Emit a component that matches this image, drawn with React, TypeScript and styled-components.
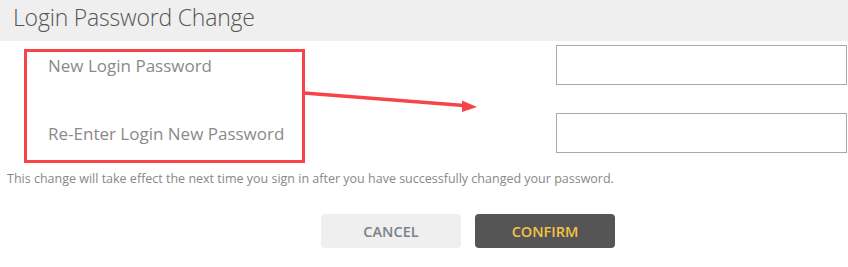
import styled, { createGlobalStyle } from 'styled-components';

const GlobalStyle = createGlobalStyle`
  html, body {
    margin: 0;
    padding: 0;
    background: #ffffff;
  }
  body {
    font-family: 'Open Sans', 'Liberation Sans', sans-serif;
  }
`;

const fields = ['New Login Password', 'Re-Enter Login New Password'];

export default function App() {
  return (
    <>
      <GlobalStyle />
      <Page>
        <Header>
          <Title>Login Password Change</Title>
        </Header>
        <Form>
          {fields.map((label) => (
            <FieldRow key={label}>
              <FieldLabel>{label}</FieldLabel>
              <FieldInput type="password" />
            </FieldRow>
          ))}
        </Form>
        <Note>
          This change will take effect the next time you sign in after you have successfully changed your
          password.
        </Note>
        <Actions>
          <ActionButton>CANCEL</ActionButton>
          <ActionButton primary>CONFIRM</ActionButton>
        </Actions>
        <Annotation />
      </Page>
    </>
  );
}

// red callout drawn over the form: box round the labels and an arrow to the inputs
function Annotation() {
  return (
    <AnnotationLayer width="848" height="267" viewBox="0 0 848 267">
      <rect x="25.5" y="50.5" width="278" height="111" fill="none" stroke="#f74448" strokeWidth="3" />
      <line x1="304" y1="93" x2="464" y2="105.5" stroke="#f74448" strokeWidth="3.5" />
      <polygon points="462,100.5 477,107 462,112" fill="#f74448" />
    </AnnotationLayer>
  );
}

const Page = styled.div`
  position: relative;
  width: 848px;
  height: 267px;
  overflow: hidden;
`;

const Header = styled.div`
  height: 41px;
  box-sizing: border-box;
  background: #efefef;
  display: flex;
  align-items: flex-start;
  padding: 2px 0 0 13px;
`;

const Title = styled.h1`
  margin: 0;
  font-family: 'Open Sans', 'Liberation Sans', sans-serif;
  font-weight: 300;
  font-size: 23px;
  line-height: 31px;
  color: #555555;
  letter-spacing: -0.2px;
`;

const Form = styled.div`
  display: flex;
  flex-direction: column;
  gap: 28px;
  padding-top: 4px;
`;

const FieldRow = styled.div`
  display: grid;
  grid-template-columns: 508px 291px;
  align-items: center;
  padding-left: 48px;
  height: 40px;
`;

const FieldLabel = styled.label`
  font-size: 17px;
  color: #8a8a8a;
  white-space: nowrap;
`;

const FieldInput = styled.input`
  box-sizing: border-box;
  width: 291px;
  height: 40px;
  border: 1px solid #a9a9a9;
  margin: 0;
  padding: 0 8px;
  outline: none;
`;

const Note = styled.p`
  margin: 0;
  padding: 17px 0 0 7px;
  font-size: 12.5px;
  line-height: 18px;
  color: #888888;
  white-space: nowrap;
`;

const Actions = styled.div`
  display: flex;
  gap: 14px;
  padding: 26px 0 0 321px;
`;

const ActionButton = styled.button<{ primary?: boolean }>`
  width: 140px;
  height: 34px;
  border: none;
  border-radius: 4px;
  font-family: 'Open Sans', 'Liberation Sans', sans-serif;
  font-size: 14.5px;
  font-weight: 600;
  background: ${(p) => (p.primary ? '#555555' : '#efefef')};
  color: ${(p) => (p.primary ? '#f5c343' : '#7b8189')};
  cursor: pointer;
`;

const AnnotationLayer = styled.svg`
  position: absolute;
  left: 0;
  top: 0;
  pointer-events: none;
`;
